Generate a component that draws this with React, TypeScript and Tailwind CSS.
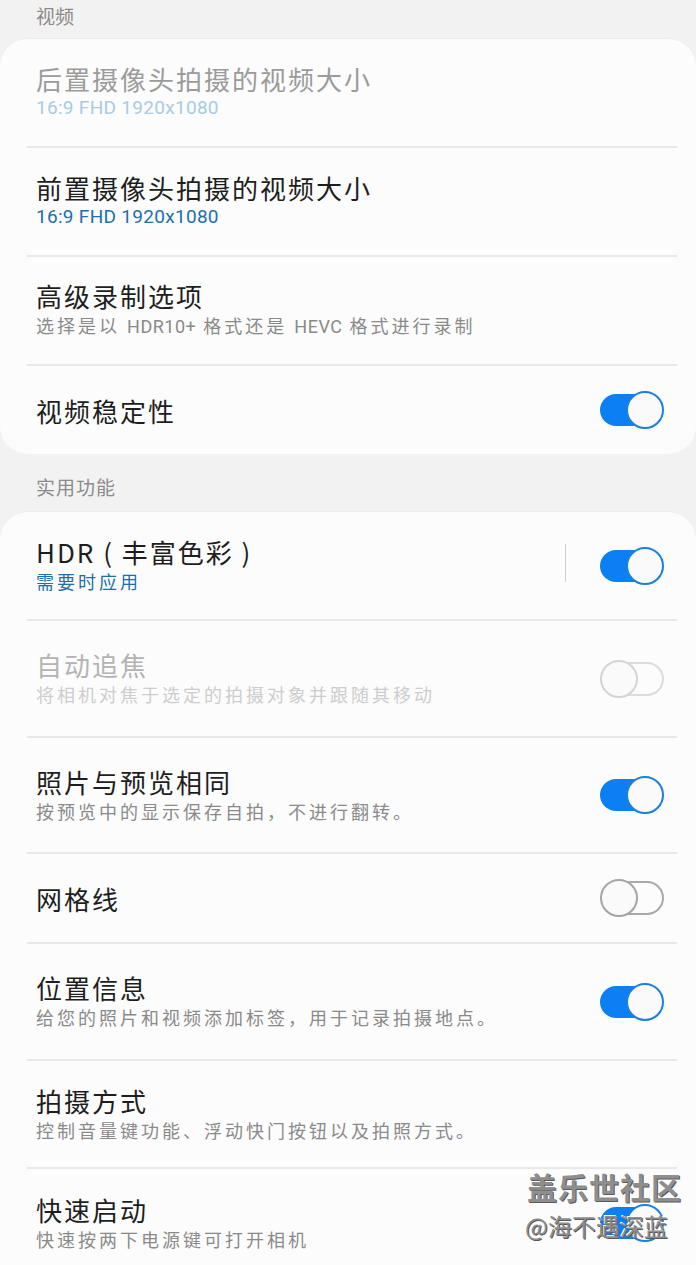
import React from 'react';

type Row = {
  title: string;
  sub?: React.ReactNode;
  latinSub?: boolean;
  subTone?: 'gray' | 'blue' | 'paleBlue';
  toggle?: 'on' | 'off';
  disabled?: boolean;
  dimTitle?: boolean;
  divider?: boolean;
  h: number;
};

const font = { fontFamily: '"Noto Sans CJK SC", "Noto Sans", sans-serif' };
const latin = { fontFamily: 'Roboto, "Noto Sans CJK SC", sans-serif' };

const Toggle: React.FC<{ on: boolean; disabled?: boolean }> = ({ on, disabled }) => {
  if (on) {
    return (
      <div className="relative w-[64px] h-[38px] flex items-center">
        <div className="w-[62px] h-[32px] rounded-full bg-[#0a80f4]" />
        <div className="absolute right-0 top-0 w-[38px] h-[38px] rounded-full bg-[#fafafa] border-2 border-[#1a7fe0]" />
      </div>
    );
  }
  return (
    <div className="relative w-[64px] h-[38px] flex items-center justify-end">
      <div
        className={`w-[62px] h-[34px] rounded-full border-2 ${disabled ? 'border-[#dcdcdc]' : 'border-[#a9a9a9]'}`}
      />
      <div
        className={`absolute left-0 top-0 w-[38px] h-[38px] rounded-full bg-[#fafafa] border-2 ${
          disabled ? 'border-[#d4d4d4]' : 'border-[#a5a5a5]'
        }`}
      />
    </div>
  );
};

const SettingRow: React.FC<{ row: Row; hdrLine?: boolean }> = ({ row, hdrLine }) => {
  const titleColor = row.disabled ? 'text-[#b3b3b3]' : row.dimTitle ? 'text-[#9b9b9b]' : 'text-[#1e1e1e]';
  const subColor = row.disabled
    ? 'text-[#cdcdcd]'
    : row.subTone === 'blue'
    ? 'text-[#1d6fae]'
    : row.subTone === 'paleBlue'
    ? 'text-[#a9cbe3]'
    : 'text-[#8a8a8a]';
  return (
    <div>
      <div className="flex items-center pl-[36px] pr-[32px]" style={{ height: row.h }}>
        <div className="flex-1 min-w-0 pt-[1px]">
          <div className={`text-[26px] leading-[30px] tracking-[2px] ${titleColor}`} style={font}>
            {row.title}
          </div>
          {row.sub && (
            <div
              className={`${row.latinSub ? 'text-[19px] tracking-[0.3px]' : 'text-[18px] tracking-[3px]'} leading-[28px] ${subColor}`}
              style={row.latinSub ? latin : font}
            >
              {row.sub}
            </div>
          )}
        </div>
        {hdrLine && <div className="w-px h-[38px] bg-[#d0d0d0] mr-[34px] -mt-[6px]" />}
        {row.toggle && <Toggle on={row.toggle === 'on'} disabled={row.disabled} />}
      </div>
      {row.divider && <div className="ml-[27px] mr-[19px] h-[2px] bg-[#e8e8e8]" />}
    </div>
  );
};

const L: React.FC<{ children: React.ReactNode }> = ({ children }) => (
  <span className="tracking-[0.5px]" style={latin}>
    {children}
  </span>
);

const videoRows: Row[] = [
  { title: '后置摄像头拍摄的视频大小', sub: '16:9 FHD 1920x1080', latinSub: true, subTone: 'paleBlue', dimTitle: true, divider: true, h: 107 },
  { title: '前置摄像头拍摄的视频大小', sub: '16:9 FHD 1920x1080', latinSub: true, subTone: 'blue', divider: true, h: 107 },
  {
    title: '高级录制选项',
    sub: (
      <>
        选择是以 <L>HDR10+</L> 格式还是 <L>HEVC</L> 格式进行录制
      </>
    ),
    divider: true,
    h: 107,
  },
  { title: '视频稳定性', toggle: 'on', h: 88 },
];

const utilRows: Row[] = [
  { title: 'HDR ( 丰富色彩 )', sub: '需要时应用', subTone: 'blue', toggle: 'on', divider: true, h: 107 },
  { title: '自动追焦', sub: '将相机对焦于选定的拍摄对象并跟随其移动', toggle: 'off', disabled: true, divider: true, h: 115 },
  { title: '照片与预览相同', sub: '按预览中的显示保存自拍，不进行翻转。', toggle: 'on', divider: true, h: 114 },
  { title: '网格线', toggle: 'off', divider: true, h: 88 },
  { title: '位置信息', sub: '给您的照片和视频添加标签，用于记录拍摄地点。', toggle: 'on', divider: true, h: 115 },
  { title: '拍摄方式', sub: '控制音量键功能、浮动快门按钮以及拍照方式。', divider: true, h: 106 },
  { title: '快速启动', sub: '快速按两下电源键可打开相机', toggle: 'on', h: 108 },
];

export default function App() {
  return (
    <div className="relative w-[696px] h-[1265px] overflow-hidden bg-[#f2f2f2]" style={font}>
      <div className="h-[38px] pl-[36px] pt-[2px] text-[19px] leading-[28px] text-[#8b8b8b]">视频</div>
      <div className="bg-[#fcfcfc] rounded-[28px] border-t border-[#ececec]">
        {videoRows.map((r, i) => (
          <SettingRow key={i} row={r} />
        ))}
      </div>
      <div className="h-[57px] pl-[36px] pt-[19px] text-[19px] leading-[28px] tracking-[1px] text-[#8b8b8b]">实用功能</div>
      <div className="bg-[#fcfcfc] rounded-t-[28px] border-t border-[#ececec]">
        {utilRows.map((r, i) => (
          <SettingRow key={i} row={r} hdrLine={i === 0} />
        ))}
      </div>

      {/* watermark */}
      <div
        className="absolute left-[527px] top-[1167px] text-[30px] leading-[38px] font-bold text-[#8e8e8e] tracking-[1px]"
        style={{ ...font, textShadow: '1px 1px 0 #5a5a5a, -1px -1px 0 #ffffff' }}
      >
        盖乐世社区
      </div>
      <div
        className="absolute left-[525px] top-[1210px] text-[24px] leading-[32px] text-[#8e8e8e]"
        style={{ ...font, textShadow: '1px 1px 0 #5a5a5a, -1px -1px 0 #ffffff' }}
      >
        @海不遇深蓝
      </div>
    </div>
  );
}
